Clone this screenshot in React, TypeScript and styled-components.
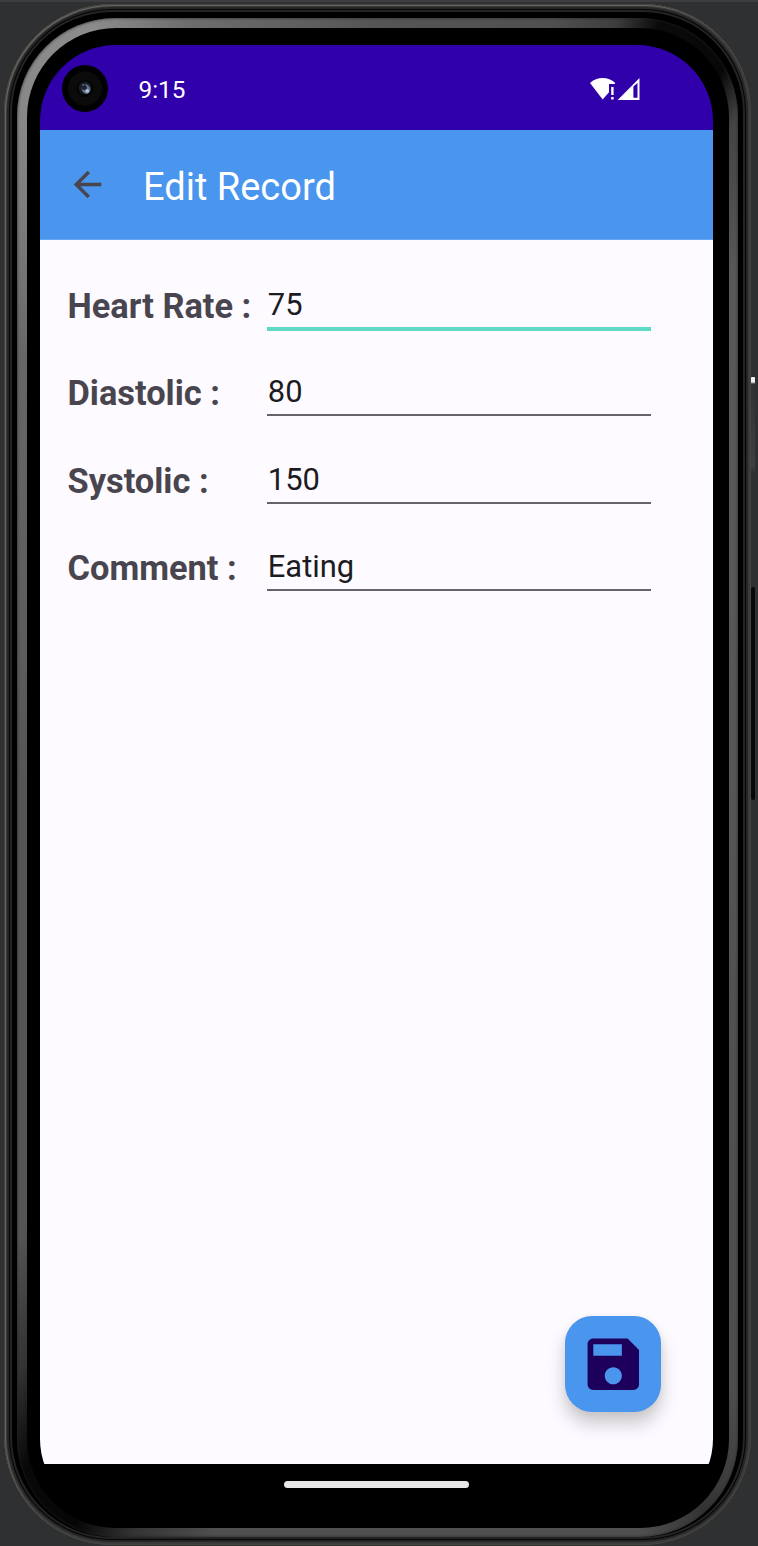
import React from "react";
import styled, { createGlobalStyle } from "styled-components";

const GlobalStyle = createGlobalStyle`
  * { box-sizing: border-box; }
  body { margin: 0; background: #2f3032; font-family: Roboto, sans-serif; overflow: hidden; }
`;

const Desk = styled.main`
  position: relative;
  width: 758px;
  height: 1546px;
  padding: 4px 7px 1px 4px;
  overflow: hidden;
  background: linear-gradient(#3d3e40 0 2px, #2f3032 2px);
`;

const SideKey = styled.i<{ $top: number; $height: number; $tone: string }>`
  position: absolute;
  right: 3px;
  width: 4px;
  top: ${(p) => p.$top}px;
  height: ${(p) => p.$height}px;
  border-radius: 2px;
  background: ${(p) => p.$tone};
`;

const Casing = styled.div`
  height: 1541px;
  padding: 14px 13px 8px;
  border-radius: 108px;
  background: #000;
  box-shadow:
    inset 0 0 0 1px #45443f,
    inset 1px 1px 0 1px #64635f,
    inset 0 0 0 3px #3b3b3b,
    inset 0 0 0 5px #252525,
    inset 0 0 0 6px #050505,
    inset 0 0 0 8px #242424;
`;

const Bevel = styled.div`
  height: 100%;
  padding: 10px 9px 9px 10px;
  border-radius: 98px;
  background: conic-gradient(
    #555 0deg, #505050 13deg, #3e3e3e 17.5deg, #0a0a0a 20.5deg, #080808 26deg,
    #444 28.5deg, #585858 35deg, #565656 90deg, #4d4d4d 150deg, #333 156deg,
    #505050 161deg, #505050 192deg, #333 198deg, #060606 202deg,
    #080808 207deg, #333 211deg, #555 218deg, #555 270deg, #666 320deg,
    #888 332deg, #8c8c8c 339deg, #6d6d6d 346deg, #555 360deg
  );
  box-shadow: inset 0 0 3px #222;
`;

const Glass = styled.div`
  height: 100%;
  padding: 17px 16px 0 13px;
  border-radius: 89px;
  background: #000;
`;

const Screen = styled.div`
  display: flex;
  flex-direction: column;
  width: 673px;
  height: 1470px;
  overflow: hidden;
  border-radius: 76px;
  background: #000;
`;

const StatusBar = styled.header`
  display: flex;
  align-items: center;
  flex: 0 0 85px;
  padding: 5px 73px 0 22px;
  background: #3000ab;
  color: #fff;
`;

const Camera = styled.div`
  display: grid;
  place-items: center;
  width: 46px;
  height: 47px;
  margin-top: -4px;
  border-radius: 50%;
  background: radial-gradient(circle, #030303 0 8px, #0b0b0b 9px 16px, #000 18px);
`;

const Clock = styled.time`
  flex: 1;
  margin: 0 0 0 30.5px;
  font-size: 24.3px;
  line-height: 28px;
`;

const StatusIcons = styled.svg`
  display: block;
  margin-top: -2px;
`;

const AppBar = styled.div`
  display: flex;
  align-items: center;
  flex: 0 0 110px;
  padding-left: 27px;
  background: #4a95ed;
  border-bottom: 1px solid #66a5ef;
`;

const BackButton = styled.button`
  display: flex;
  padding: 0;
  margin-top: 1px;
  border: 0;
  background: none;
  color: #49454f;
`;

const Title = styled.h1`
  margin: 5px 0 0 34.9px;
  font-size: 38px;
  line-height: 44px;
  font-weight: 400;
  color: #fff;
`;

const Content = styled.section`
  display: flex;
  flex-direction: column;
  flex: 0 0 1224px;
  padding: 22px 52px 52px 27px;
  background: #fdfbff;
`;

const Field = styled.label`
  display: grid;
  grid-template-columns: 200px 384px;
  align-items: start;
  height: 87.4px;
  padding-top: 20px;
`;

const Label = styled.span`
  padding: 4px 0 0 0.5px;
  font-size: 34.4px;
  line-height: 40px;
  font-weight: 700;
  color: #49454f;
  white-space: nowrap;
`;

const Input = styled.input<{ $active?: boolean }>`
  width: 384px;
  height: ${(p) => (p.$active ? 49 : 47)}px;
  padding: 0 0 0 0.8px;
  border: 0;
  border-bottom: ${(p) => (p.$active ? "4px solid #60d8c6" : "2px solid #66636b")};
  outline: 0;
  border-radius: 0;
  background: none;
  color: #1c1b1f;
  font: 400 30.9px Roboto, sans-serif;
`;

const SaveButton = styled.button`
  display: grid;
  place-items: center;
  width: 96px;
  height: 96px;
  margin-top: auto;
  align-self: flex-end;
  padding: 0;
  border: 0;
  border-radius: 27px;
  background: #4a95ed;
  color: #1d005c;
  box-shadow: 0 12px 18px rgba(0, 0, 0, 0.2), 0 2px 8px rgba(0, 0, 0, 0.05);
`;

const NavBar = styled.footer`
  display: flex;
  justify-content: center;
  padding-top: 17px;
`;

const HomeHandle = styled.div`
  width: 185px;
  height: 7px;
  border-radius: 4px;
  background: #e8e8e8;
`;

const fields = [
  { label: "Heart Rate :", value: "75", active: true },
  { label: "Diastolic :", value: "80" },
  { label: "Systolic :", value: "150" },
  { label: "Comment :", value: "Eating" },
];

export default function App() {
  return (
    <>
      <GlobalStyle />
      <Desk>
        <SideKey $top={376} $height={100} $tone="linear-gradient(#222 0 1px, #eee 1px 6px, #303234 8px, #3d3f41 90%, #292a2c)" />
        <SideKey $top={587} $height={213} $tone="#070808" />
        <Casing>
          <Bevel>
            <Glass>
              <Screen>
                <StatusBar>
                  <Camera>
                    <svg width="14" height="14" viewBox="0 0 14 14">
                      <circle cx="7" cy="7" r="6.5" fill="#171b22" />
                      <ellipse cx="8" cy="8" rx="4.2" ry="4.8" fill="#65738c" transform="rotate(-30 8 8)" />
                      <circle cx="6.3" cy="6.6" r="2.5" fill="#1a202c" />
                      <circle cx="9.2" cy="10" r="1.8" fill="#b4c6df" />
                      <circle cx="5" cy="4" r="1" fill="#52617a" />
                    </svg>
                  </Camera>
                  <Clock>9:15</Clock>
                  <StatusIcons width="50" height="22" viewBox="0 0 50 22" fill="#fff">
                    <path d="M0 5C3.5 1.8 8 0 12.7 0S21.7 1.8 25.3 5L24.7 6H19v8.2L12.7 21.5Z" />
                    <path d="M21.2 9h2.4v8h-2.4zM21.2 19h2.4v2.4h-2.4z" />
                    <path fillRule="evenodd" d="M49.5 0v22H27.7ZM43.4 8.5V19.8H47.5V5Z" />
                  </StatusIcons>
                </StatusBar>
                <AppBar>
                  <BackButton aria-label="Back">
                    <svg width="41.1" height="41.1" viewBox="0 0 24 24" fill="currentColor">
                      <path d="M20 11H7.83l5.59-5.59L12 4l-8 8 8 8 1.41-1.41L7.83 13H20z" />
                    </svg>
                  </BackButton>
                  <Title>Edit Record</Title>
                </AppBar>
                <Content>
                  {fields.map((f) => (
                    <Field key={f.label}>
                      <Label>{f.label}</Label>
                      <Input $active={f.active} defaultValue={f.value} />
                    </Field>
                  ))}
                  <SaveButton aria-label="Save">
                    <svg width="68.6" height="68.6" viewBox="0 0 24 24" fill="currentColor">
                      <path d="M17 3H5c-1.11 0-2 .9-2 2v14c0 1.1.89 2 2 2h14c1.1 0 2-.9 2-2V7l-4-4zm-5 16c-1.66 0-3-1.34-3-3s1.34-3 3-3 3 1.34 3 3-1.34 3-3 3zm3-10H5V5h10v4z" />
                    </svg>
                  </SaveButton>
                </Content>
                <NavBar>
                  <HomeHandle />
                </NavBar>
              </Screen>
            </Glass>
          </Bevel>
        </Casing>
      </Desk>
    </>
  );
}
